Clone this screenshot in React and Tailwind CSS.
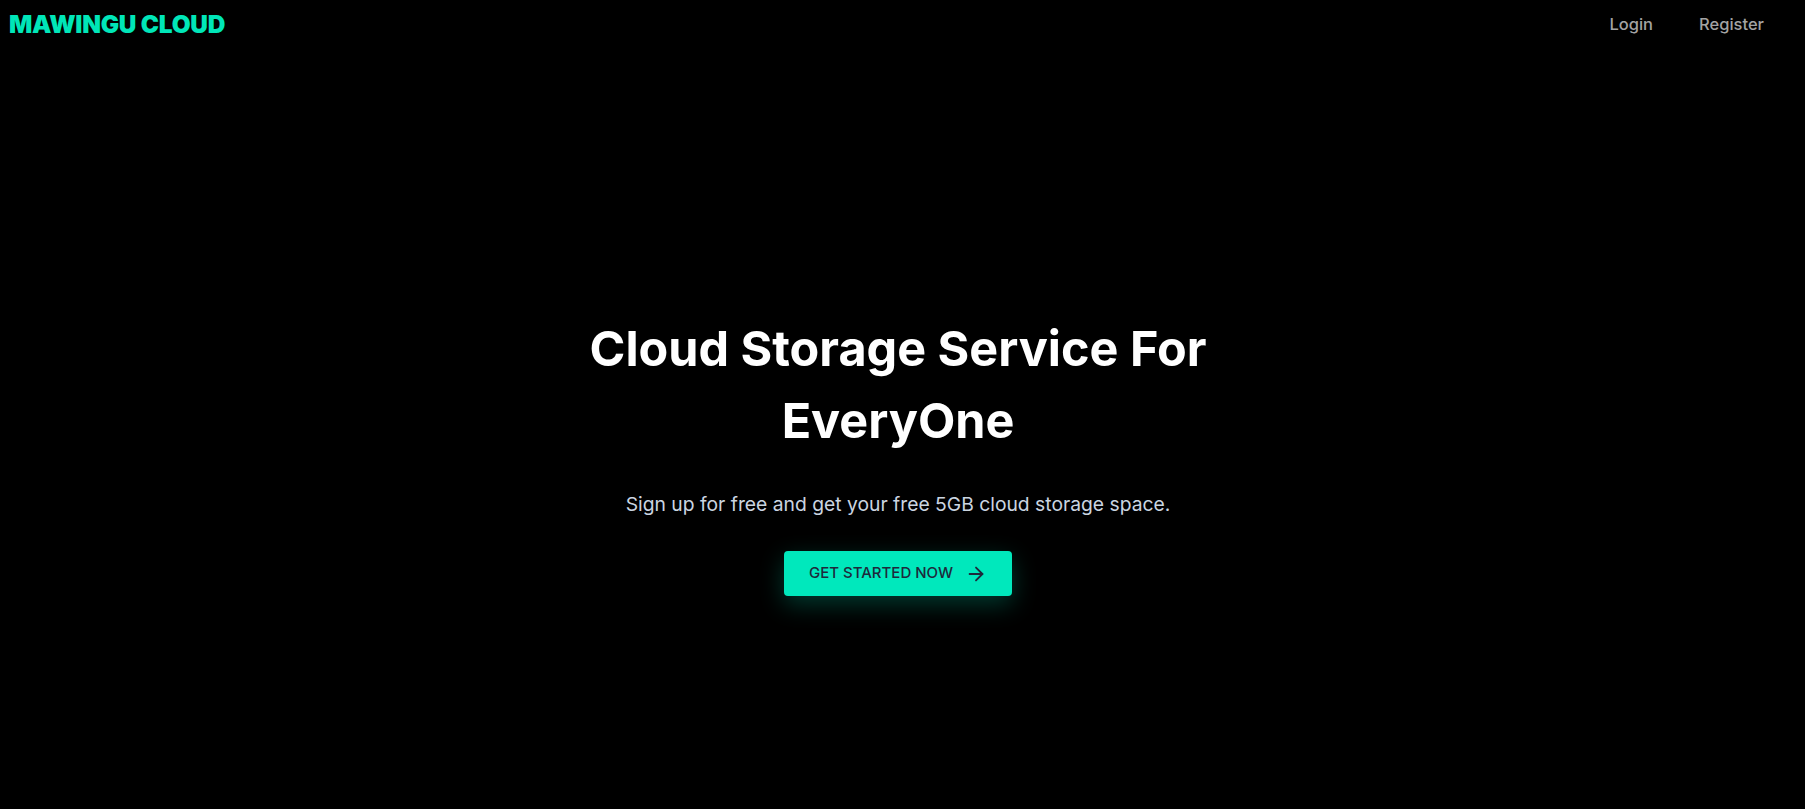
import React from "react";
import { ArrowRight } from "lucide-react";

export default function App() {
  return (
    <div className="min-h-screen bg-black text-white" style={{ fontFamily: "Inter, 'Noto Sans', sans-serif" }}>
      <nav className="flex h-12 items-center justify-between pl-[9px] pr-[41px]">
        <div className="text-[24.4px] font-black tracking-[-0.01em] text-[#00e6b8]">MAWINGU CLOUD</div>
        <div className="flex items-center gap-[46px] text-[16.5px] font-medium text-[#a3a3a3]">
          <a href="#">Login</a>
          <a href="#">Register</a>
        </div>
      </nav>
      <main className="flex flex-col items-center pr-[9px] pt-[265px] text-center">
        <h1 className="max-w-[672px] text-[48.5px] font-bold leading-[72px] text-white">
          Cloud Storage Service For EveryOne
        </h1>
        <p className="mt-[33px] text-[19.3px] leading-[28px] text-[#cbd5e1]">
          Sign up for free and get your free 5GB cloud storage space.
        </p>
        <button className="mt-[33px] flex h-[45px] w-[228px] items-center justify-center gap-[12px] rounded bg-[#00e8bc] text-[15px] font-medium text-[#1e293b] shadow-[0_8px_24px_rgba(0,232,188,0.25)]">
          GET STARTED NOW
          <ArrowRight size={22} strokeWidth={2} />
        </button>
      </main>
    </div>
  );
}
